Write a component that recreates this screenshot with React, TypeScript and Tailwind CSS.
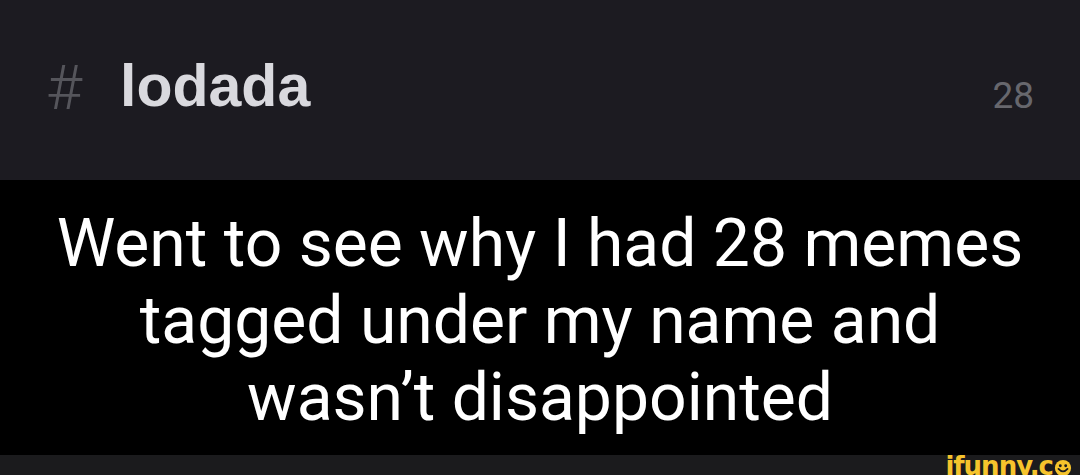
export default function App() {
  return (
    <div className="flex h-[475px] w-[1080px] flex-col overflow-hidden bg-black">
      {/* channel header */}
      <div className="flex h-[180px] shrink-0 items-center bg-[#1c1b21] pl-[46px] pr-[46px]">
        <span className="mb-[4px] font-['Roboto',sans-serif] text-[62px] font-light leading-none text-[#55555b]">
          #
        </span>
        <span className="mb-[8px] ml-[38px] font-['Liberation_Sans',Arial,sans-serif] text-[59px] font-bold leading-none text-[#d9d9de]">
          lodada
        </span>
        <span className="ml-auto pt-[10px] font-['Roboto',sans-serif] text-[37px] leading-none text-[#67676d]">
          28
        </span>
      </div>

      {/* caption */}
      <div className="flex h-[275px] shrink-0 items-center justify-center bg-black">
        <p className="pt-[6px] text-center font-['Roboto',sans-serif] text-[66px] leading-[77px] text-white">
          Went to see why I had 28 memes
          <br />
          tagged under my name and
          <br />
          wasn’t disappointed
        </p>
      </div>

      {/* watermark strip */}
      <div className="flex h-[20px] shrink-0 items-start justify-end overflow-hidden bg-[#1b1b1d] pr-[8px]">
        <div className="mt-[-2px] flex items-start font-['DejaVu_Sans',sans-serif] text-[26px] font-bold leading-none tracking-[-1px] text-[#f6c42c]">
          <span>ifunny.c</span>
          <svg className="ml-[1px] mt-[6px]" width="18" height="18" viewBox="0 0 20 20">
            <circle cx="10" cy="10" r="9" fill="#f6c42c" />
            <circle cx="7" cy="7.5" r="1.6" fill="#1b1b1d" />
            <circle cx="13" cy="7.5" r="1.6" fill="#1b1b1d" />
            <path d="M5 11 Q10 16.5 15 11" stroke="#1b1b1d" strokeWidth="2" fill="none" strokeLinecap="round" />
          </svg>
        </div>
      </div>
    </div>
  );
}
